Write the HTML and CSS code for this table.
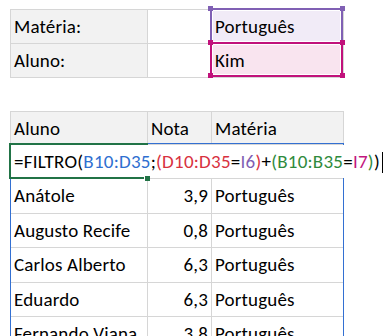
FILE: index.html
```html
<!DOCTYPE html>
<html lang="pt-BR">
<head>
<meta charset="utf-8">
<title>Filtro por matéria e aluno</title>
<link rel="stylesheet" href="styles.css">
</head>
<body>
<div class="sheet">
  <!-- criteria block: I6 / I7 -->
  <div class="grid criteria">
    <div class="cell label">Matéria:</div>
    <div class="cell"></div>
    <div class="cell ref-cell fill-purple">Português
      <div class="ref ref-purple"><i class="handle tl"></i><i class="handle tr"></i></div>
    </div>
    <div class="cell label">Aluno:</div>
    <div class="cell"></div>
    <div class="cell ref-cell fill-pink">Kim
      <div class="ref ref-pink"><i class="handle tl"></i><i class="handle tr"></i><i class="handle bl"></i><i class="handle br"></i></div>
    </div>
  </div>

  <!-- data block: B9:D35 -->
  <div class="grid data">
    <div class="cell label">Aluno</div>
    <div class="cell label">Nota</div>
    <div class="cell label">Matéria</div>

    <div class="cell edit-row">
      <span class="editor"><span class="f-k">=FILTRO(</span><span class="f-blue">B10:D35</span><span class="f-k">;</span><span class="f-red">(D10:D35</span><span class="f-k">=</span><span class="f-purple">I6</span><span class="f-red">)</span><span class="f-k">+</span><span class="f-green">(B10:B35</span><span class="f-k">=</span><span class="f-pink">I7</span><span class="f-green">)</span><span class="f-k">)</span><span class="caret"></span></span>
      <div class="active"><i class="fill-handle"></i></div>
    </div>

    <div class="cell">Anátole</div><div class="cell num">3,9</div><div class="cell">Português</div>
    <div class="cell">Augusto Recife</div><div class="cell num">0,8</div><div class="cell">Português</div>
    <div class="cell">Carlos Alberto</div><div class="cell num">6,3</div><div class="cell">Português</div>
    <div class="cell">Eduardo</div><div class="cell num">6,3</div><div class="cell">Português</div>
    <div class="cell">Fernando Viana</div><div class="cell num">3,8</div><div class="cell">Português</div>

    <div class="ref ref-blue"></div>
  </div>
</div>
</body>
</html>
```

FILE: styles.css
```css
html, body {
  margin: 0;
  padding: 0;
  background: #ffffff;
  overflow: hidden;
}

.sheet {
  padding: 9px 0 0 10px;
  font-family: Carlito, Calibri, Lato, "Liberation Sans", sans-serif;
  font-size: 19px;
  letter-spacing: 0.15px;
  color: #000000;
}

.grid {
  position: relative;
  display: grid;
  grid-template-columns: 137px 64px 132px;
  width: max-content;
  border-top: 1px solid #d6d6d6;
  border-left: 1px solid #d6d6d6;
}

.criteria {
  grid-auto-rows: 34.2px;
}

.data {
  margin-top: 32.6px;
  grid-template-rows: 33px;
  grid-auto-rows: 34.4px;
}

.cell {
  position: relative;
  box-sizing: border-box;
  border-right: 1px solid #d6d6d6;
  border-bottom: 1px solid #d6d6d6;
  padding: 0 3px;
  line-height: 33px;
  white-space: nowrap;
}

.label {
  background: #f2f2f2;
}

.num {
  text-align: right;
}

/* reference highlights drawn while editing */
.ref {
  position: absolute;
  box-sizing: border-box;
  pointer-events: none;
}

.ref-cell .ref {
  inset: -2px 0 -1px -2px;
  border: 2px solid;
  box-shadow: inset 0 0 0 1px #ffffff;
}

.fill-purple { background: #f1ebf7; }
.fill-pink { background: #f9e4ef; }

.ref-purple { border-color: #8060b4 !important; }
.ref-pink {
  border-color: #c1127b !important;
  z-index: 2;
}
.ref-cell .ref-pink { inset: -2px 0 0 -2px; }

.handle {
  position: absolute;
  width: 5px;
  height: 5px;
}
.ref-purple .handle { background: #8060b4; }
.ref-pink .handle { background: #c1127b; }
.handle.tl { left: -4px; top: -4px; }
.handle.tr { right: -4px; top: -4px; }
.handle.bl { left: -4px; bottom: -3px; }
.handle.br { right: -4px; bottom: -3px; }

.ref-blue {
  top: 31px;
  left: -1px;
  right: 0;
  bottom: -1px;
  border: 1px solid #3370d2;
  z-index: 1;
}

/* in-cell formula editor */
.edit-row {
  grid-column: 1 / -1;
  padding: 0;
}

.editor {
  position: relative;
  z-index: 2;
  display: inline-block;
  height: 100%;
  padding: 0 6px 0 3px;
  background: #ffffff;
  letter-spacing: 0.25px;
}

.caret {
  display: inline-block;
  width: 1px;
  height: 21px;
  margin-left: 2px;
  vertical-align: -5px;
  background: #000000;
}

.active {
  position: absolute;
  z-index: 3;
  left: -2px;
  top: -2px;
  width: 139px;
  bottom: -1px;
  box-sizing: border-box;
  border: 2px solid #217346;
  border-right: 0;
}

.fill-handle {
  position: absolute;
  right: -2px;
  bottom: -4px;
  width: 5px;
  height: 5px;
  background: #217346;
  box-shadow: -1px 0 0 #ffffff;
}

.f-k { color: #000000; }
.f-blue { color: #2f6fd0; }
.f-red { color: #d8323f; }
.f-purple { color: #7f5fb3; }
.f-green { color: #2f8a3c; }
.f-pink { color: #c2167e; }
```
